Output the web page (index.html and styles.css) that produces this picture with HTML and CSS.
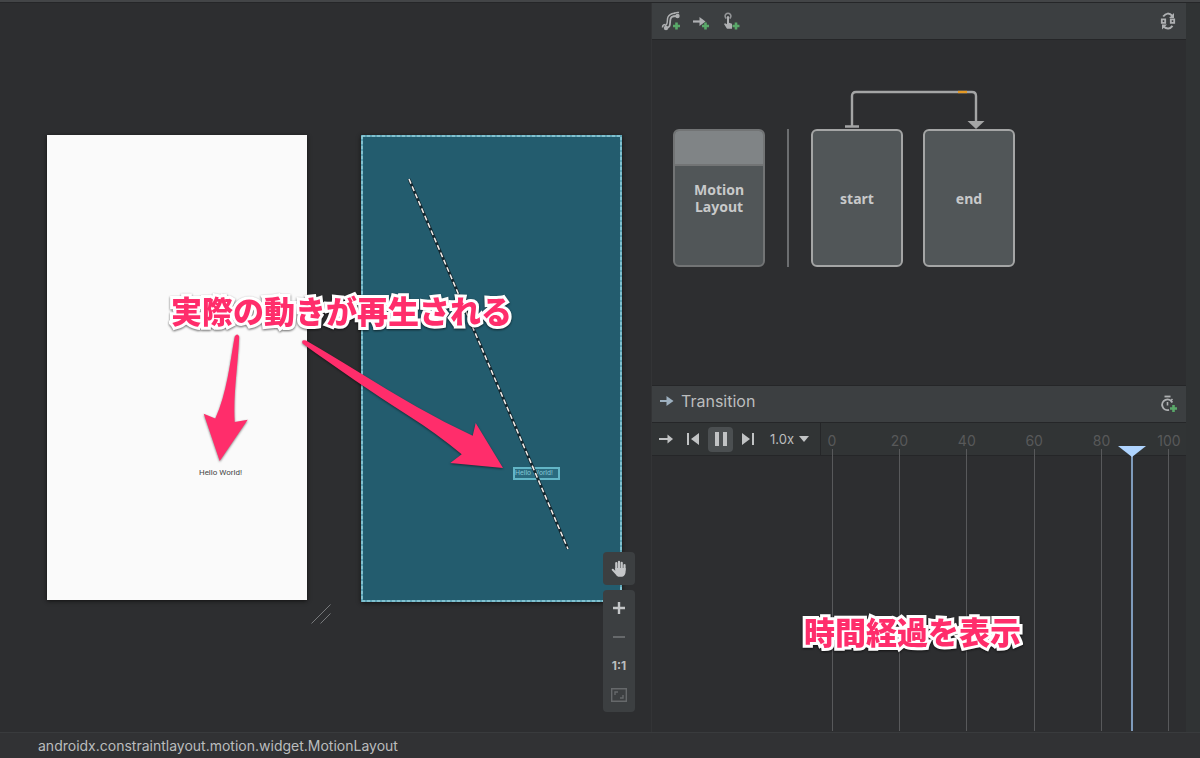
FILE: index.html
```html
<!DOCTYPE html>
<html lang="ja">
<head>
    <meta charset="UTF-8">
    <meta name="viewport" content="width=device-width, initial-scale=1.0">
    <title>Motion Editor</title>
    <link rel="stylesheet" href="styles.css">
</head>
<body>
    <div class="workspace">
        <main class="surface">
            <div class="previews">
                <div class="device">
                    <span class="hello">Hello World!</span>
                </div>
                <svg class="resize-handle" width="20" height="20" viewBox="0 0 20 20">
                    <path d="M0.500 19.500 19.500 0.500M9.500 19.500l10-10" fill="none" stroke="#77797b"/>
                </svg>
                <div class="blueprint">
                    <span class="hello hello-selected">Hello World!</span>
                    <svg class="motion-path" width="261" height="467" viewBox="0 0 261 467">
                        <rect x="1" y="1" width="259" height="465" fill="none" stroke="#5da5b7" stroke-width="2"/>
                        <rect x="1" y="1" width="259" height="465" fill="none" stroke="#a5dce6" stroke-dasharray="3 2"/>
                        <path d="M48 44 207 414" fill="none" stroke="#14272f" stroke-width="3"/>
                        <path d="M48 44 207 414" fill="none" stroke="#f4eeea" stroke-width="1.500" stroke-dasharray="5 3"/>
                    </svg>
                </div>
            </div>

            <div class="zoom-controls">
                <button class="pan-button" aria-label="Pan">
                    <svg width="16" height="18" viewBox="0 0 16 18">
                        <path d="M5.300 9V3.200M8 9V1.800M10.700 9V2.800M13.500 10V5" fill="none" stroke="#c4c6c8" stroke-width="2.200" stroke-linecap="round"/>
                        <path d="M4.200 8h10.400v3.500c0 3-1.600 5.300-4.600 5.300H8.500c-1.700 0-2.600-.8-3.500-2.100L.9 10.200c-.7-1 .5-2 1.500-1.200l1.800 1.700z" fill="#c4c6c8"/>
                    </svg>
                </button>
                <div class="zoom-group">
                    <button aria-label="Zoom in">
                        <svg width="12" height="12" viewBox="0 0 12 12"><path d="M6 0v12M0 6h12" stroke="#c4c6c8" stroke-width="2.400"/></svg>
                    </button>
                    <button aria-label="Zoom out">
                        <svg width="12" height="12" viewBox="0 0 12 12"><path d="M0 6h12" stroke="#66696b" stroke-width="2"/></svg>
                    </button>
                    <button class="actual-size">1:1</button>
                    <button aria-label="Zoom to fit">
                        <svg width="16" height="14" viewBox="0 0 16 14">
                            <path d="M.7.700h14.600v12.600H.7zM4 7V4h3M12 7v3H9" fill="none" stroke="#66696b" stroke-width="1.400"/>
                        </svg>
                    </button>
                </div>
            </div>

            <svg class="arrows" width="652" height="729" viewBox="0 3 652 729">
                <path d="M234.700 336.500Q237.300 332.500 239.200 336.500C238 366 233 394 234.700 422L247.700 419.700 219.700 461 203.700 413.700 215.300 418.500C227 393 230 362 234.700 336.500z"/>
                <path d="M306 340.500C340 360 375 383 417 407Q445 423 472.700 435.700L475.700 423 503 468 450.300 463 461.700 454.300Q436 433 409 416C370 391 338 369 302.500 343.500Q301 339 306 340.500z"/>
            </svg>
            <p class="note note-motion">実際の動きが再生される</p>
        </main>

        <section class="inspector">
            <div class="toolbar">
                <button aria-label="Create constraint set">
                    <svg width="20" height="20" viewBox="0 0 20 20">
                        <path d="M5 17c4 0 4-3 4.200-7S10.500 5 16 5" fill="none" stroke="#aeb0b2" stroke-width="1.800"/>
                        <path d="M4 14.500C7.500 14 5.500 9.500 7 6S11 2.500 14 2" fill="none" stroke="#aeb0b2" stroke-width="1.500"/>
                        <circle cx="5" cy="17" r="2.200" fill="#aeb0b2"/>
                        <circle cx="16.500" cy="5" r="2.200" fill="#aeb0b2"/>
                        <path d="M1.500 16.500q0-3 3-3M13 3q1-2 5-1.500" fill="none" stroke="#aeb0b2" stroke-width="1.500"/>
                        <path d="M15.500 11.500v7M12 15h7" stroke="#59a869" stroke-width="2.600"/>
                    </svg>
                </button>
                <button aria-label="Create transition">
                    <svg width="20" height="20" viewBox="0 0 20 20">
                        <path d="M1 10.500h8" stroke="#aeb0b2" stroke-width="2.200"/>
                        <path d="M7.500 6v9l6-4.500z" fill="#aeb0b2"/>
                        <path d="M13.500 11.500v7M10 15h7" stroke="#59a869" stroke-width="2.600"/>
                    </svg>
                </button>
                <button aria-label="Create click or swipe handler">
                    <svg width="20" height="20" viewBox="0 0 20 20">
                        <path d="M3.400 7.500a2.900 2.900 0 1 1 3.200 0" fill="none" stroke="#929496" stroke-width="1.600"/>
                        <path d="M4 5.500q1-1 2 0v6.300l3 1v5H4L1 13l1-.8 2 1z" fill="#aeb0b2"/>
                        <path d="M13 11.500v7M9.500 15h7" stroke="#59a869" stroke-width="2.600"/>
                    </svg>
                </button>
                <button class="toolbar-end" aria-label="Cycle between layouts">
                    <svg width="16" height="18" viewBox="0 0 16 18">
                        <path d="M3.200 4.500Q7.500-1 12.500 4M12.500 13.800Q8.500 19 3.500 14.500" fill="none" stroke="#aeb0b2" stroke-width="2"/>
                        <path d="M14 1v5H9zM2 17.500v-5h5z" fill="#aeb0b2"/>
                        <path d="M1.800 7.400h3.400v3.400H1.800zM10.800 7.400h3.400v3.400h-3.400z" fill="#3c3f41" stroke="#aeb0b2" stroke-width="1.800"/>
                    </svg>
                </button>
            </div>

            <div class="graph">
                <button class="card layout-card"><span class="card-top"></span><span class="card-name">Motion Layout</span></button>
                <span class="divider"></span>
                <div class="states">
                    <svg class="transition-arrow" width="205" height="39" viewBox="0 0 205 39">
                        <path d="M41 36V6q0-4 4-4h116q4 0 4 4v27M34 36.500h14" fill="none" stroke="#a4a5a5" stroke-width="2.400"/>
                        <path d="M147 2h9" stroke="#e59a25" stroke-width="2.400"/>
                        <path d="M156.500 31h17L165 39z" fill="#a4a5a5"/>
                    </svg>
                    <div class="state-row">
                        <button class="card"><span class="card-name">start</span></button>
                        <button class="card"><span class="card-name">end</span></button>
                    </div>
                </div>
            </div>

            <header class="transition-header">
                <svg width="14" height="10" viewBox="0 0 14 10"><path d="M0 5h8" stroke="#9db0bf" stroke-width="2"/><path d="M6.500 0v10l7-5z" fill="#9db0bf"/></svg>
                <h2>Transition</h2>
                <button aria-label="Create key frames">
                    <svg width="18" height="18" viewBox="0 0 18 18">
                        <path d="M4.500 1.500h6" stroke="#aeb0b2" stroke-width="1.800"/>
                        <path d="M12.300 7.500A5.300 5.300 0 1 0 9 14.800" fill="none" stroke="#aeb0b2" stroke-width="1.900"/>
                        <path d="M7.500 7v3.500M10.500 6l2-2" stroke="#aeb0b2" stroke-width="1.600"/>
                        <path d="M13.500 10v7M10 13.500h7" stroke="#59a869" stroke-width="2.600"/>
                    </svg>
                </button>
            </header>

            <div class="timeline">
                <div class="transport">
                    <button aria-label="Play direction"><svg width="14" height="10" viewBox="0 0 14 10"><path d="M0 5h11" stroke="#c1c3c4" stroke-width="2"/><path d="M8.500.500v9L14 5z" fill="#c1c3c4"/></svg></button>
                    <button aria-label="Go to start"><svg width="12" height="12" viewBox="0 0 12 12"><path d="M0 0h2v12H0zM12 0v12L4 6z" fill="#c1c3c4"/></svg></button>
                    <button class="pause" aria-label="Pause"><svg width="12" height="14" viewBox="0 0 12 14"><path d="M0 0h4v14H0zM8 0h4v14H8z" fill="#c1c3c4"/></svg></button>
                    <button aria-label="Go to end"><svg width="12" height="12" viewBox="0 0 12 12"><path d="M10 0h2v12h-2zM0 0v12l8-6z" fill="#c1c3c4"/></svg></button>
                    <button class="speed">1.0x <svg width="10" height="6" viewBox="0 0 10 6"><path d="M0 0h10L5 6z" fill="#c1c3c4"/></svg></button>
                </div>
                <div class="track">
                    <div class="tick">0</div>
                    <div class="tick">20</div>
                    <div class="tick">40</div>
                    <div class="tick">60</div>
                    <div class="tick">80</div>
                    <div class="tick">100</div>
                    <div class="playhead"></div>
                </div>
                <p class="note note-time">時間経過を表示</p>
            </div>
        </section>
    </div>

    <footer class="status">androidx.constraintlayout.motion.widget.MotionLayout</footer>
</body>
</html>
```
FILE: styles.css
```css
:root {
    --bg: #2d2e30;
    --bar: #3c3f41;
    --strip: #313435;
    --line: #252628;
    --text: #bbbdbe;
    --pink: #ff2d6b;
}

* {
    box-sizing: border-box;
}

body {
    margin: 0;
    min-height: 100vh;
    display: flex;
    flex-direction: column;
    border-top: 2px solid #434547;
    background: var(--bg);
    color: var(--text);
    font-family: Inter, "Noto Sans CJK JP", sans-serif;
    font-size: 14px;
}

button {
    display: flex;
    align-items: center;
    justify-content: center;
    padding: 0;
    border: none;
    background: none;
    color: inherit;
    font: inherit;
    cursor: pointer;
}

svg {
    display: block;
    flex: none;
}

.workspace {
    flex: 1;
    display: grid;
    grid-template-columns: 652fr 534fr;
    padding-right: 14px;
    border-top: 1px solid var(--line);
    background: #303334;
}

/* design surface */
.surface {
    position: relative;
    background: var(--bg);
    border-right: 1px solid #333436;
}

.previews {
    display: flex;
    align-items: flex-start;
    padding: 132px 0 0 47px;
}

.device {
    display: flex;
    flex-direction: column;
    align-items: center;
    width: 260px;
    height: 465px;
    padding: 332px 0 0 87px;
    background: #fafafa;
    box-shadow: 0 1px 4px #111;
}

.hello {
    height: 12px;
    color: #444;
    font-family: Roboto, sans-serif;
    font-size: 8px;
    line-height: 12px;
}

.resize-handle {
    margin: 469px 30px 0 4px;
}

.blueprint {
    position: relative;
    width: 261px;
    height: 467px;
    padding: 332px 0 0 152px;
    background: #235c6e;
    box-shadow: 0 1px 4px #111;
}

.hello-selected {
    display: block;
    width: 47px;
    height: 13px;
    border: 2px solid #62b5c6;
    background: #2a6b7f;
    color: #82c6d4;
    font-size: 7px;
    line-height: 9px;
    white-space: nowrap;
}

.motion-path {
    position: absolute;
    inset: 0;
}

.zoom-controls {
    position: absolute;
    right: 16px;
    bottom: 20px;
    display: flex;
    flex-direction: column;
    gap: 5px;
    width: 32px;
}

.pan-button,
.zoom-group {
    border-radius: 4px;
    background: var(--bar);
}

.pan-button {
    height: 33px;
}

.zoom-group {
    display: flex;
    flex-direction: column;
    padding: 3px 0;
}

.zoom-group button {
    height: 29px;
}

.actual-size {
    font-size: 12px;
    font-weight: 700;
}

.arrows {
    position: absolute;
    top: 0;
    left: 0;
    fill: var(--pink);
    filter: drop-shadow(0 1px 1px rgba(0, 0, 0, 0.5));
}

.note {
    position: absolute;
    margin: 0;
    color: var(--pink);
    font-family: "Noto Sans CJK JP", sans-serif;
    font-size: 31px;
    font-weight: 900;
    line-height: 40px;
    white-space: nowrap;
    -webkit-text-stroke: 6px #fff;
    paint-order: stroke fill;
    filter: drop-shadow(0 1px 1px rgba(0, 0, 0, 0.6));
}

.note-motion {
    top: 287px;
    left: 171px;
}

/* motion editor */
.inspector {
    display: grid;
    grid-template-rows: 37px 345fr 37px 310fr;
    background: var(--bg);
}

.toolbar {
    display: flex;
    align-items: center;
    gap: 11px;
    padding: 0 10px 0 9px;
    border-bottom: 1px solid var(--line);
    background: var(--bar);
}

.toolbar-end {
    margin-left: auto;
}

.graph {
    display: flex;
    align-items: flex-start;
    gap: 22px;
    padding: 50px 0 0 21px;
}

.card {
    display: flex;
    flex-direction: column;
    width: 92px;
    height: 138px;
    border: 2px solid #a4a5a5;
    border-radius: 6px;
    background: #515658;
    color: #c8c9ca;
    font-family: "Noto Sans", sans-serif;
    font-size: 14px;
    font-weight: 700;
    line-height: 17px;
}

.layout-card {
    position: relative;
    margin-top: 39px;
    border-color: #727475;
}

.card-top {
    position: absolute;
    top: 0;
    left: 0;
    right: 0;
    height: 35px;
    border-bottom: 2px solid #727475;
    border-radius: 4px 4px 0 0;
    background: #808486;
}

.card-name {
    max-width: 60px;
}

.divider {
    width: 2px;
    height: 138px;
    margin-top: 39px;
    background: #6c6e70;
}

.state-row {
    display: flex;
    gap: 20px;
}

.transition-header {
    display: flex;
    align-items: center;
    gap: 7px;
    padding: 0 8px 6px;
    border-top: 1px solid var(--line);
    background: var(--bar);
}

.transition-header h2 {
    margin: 0;
    font-size: 16px;
    font-weight: 400;
}

.transition-header button {
    margin: 6px 0 0 auto;
}

.timeline {
    position: relative;
    display: grid;
    grid-template-columns: 169px 1fr;
    background: linear-gradient(var(--strip) 33px, var(--line) 33px, var(--line) 34px, var(--bg) 34px);
}

.transport {
    display: flex;
    align-items: center;
    gap: 14px;
    height: 33px;
    padding: 0 9px 0 7px;
    border-right: 1px solid var(--line);
    border-top: 1px solid var(--line);
}

.pause {
    width: 25px;
    height: 25px;
    margin: 0 -5px;
    border-radius: 4px;
    background: #4b4f51;
}

.speed {
    gap: 5px;
    margin-left: 2px;
    font-size: 13px;
}

.track {
    position: relative;
    display: flex;
    justify-content: space-between;
    padding: 10px 16px 1px 10px;
    border-top: 1px solid var(--line);
}

.tick {
    display: flex;
    flex-direction: column;
    align-items: center;
    width: 2px;
    color: #58595a;
    line-height: 16px;
}

.tick::after {
    content: "";
    flex: 1;
    width: 1px;
    background: #58595b;
}

.playhead {
    position: absolute;
    top: 23px;
    bottom: 1px;
    left: 85%;
    width: 2px;
    background: #7f9bbb;
}

.playhead::before {
    content: "";
    position: absolute;
    left: -13px;
    border: 14px solid transparent;
    border-top: 11px solid #afd4ff;
    border-bottom: 0;
}

.note-time {
    top: 189px;
    left: 152px;
}

.status {
    height: 26px;
    padding: 0 38px;
    border-top: 1px solid #393b3d;
    background: #313234;
    line-height: 25px;
}
```
